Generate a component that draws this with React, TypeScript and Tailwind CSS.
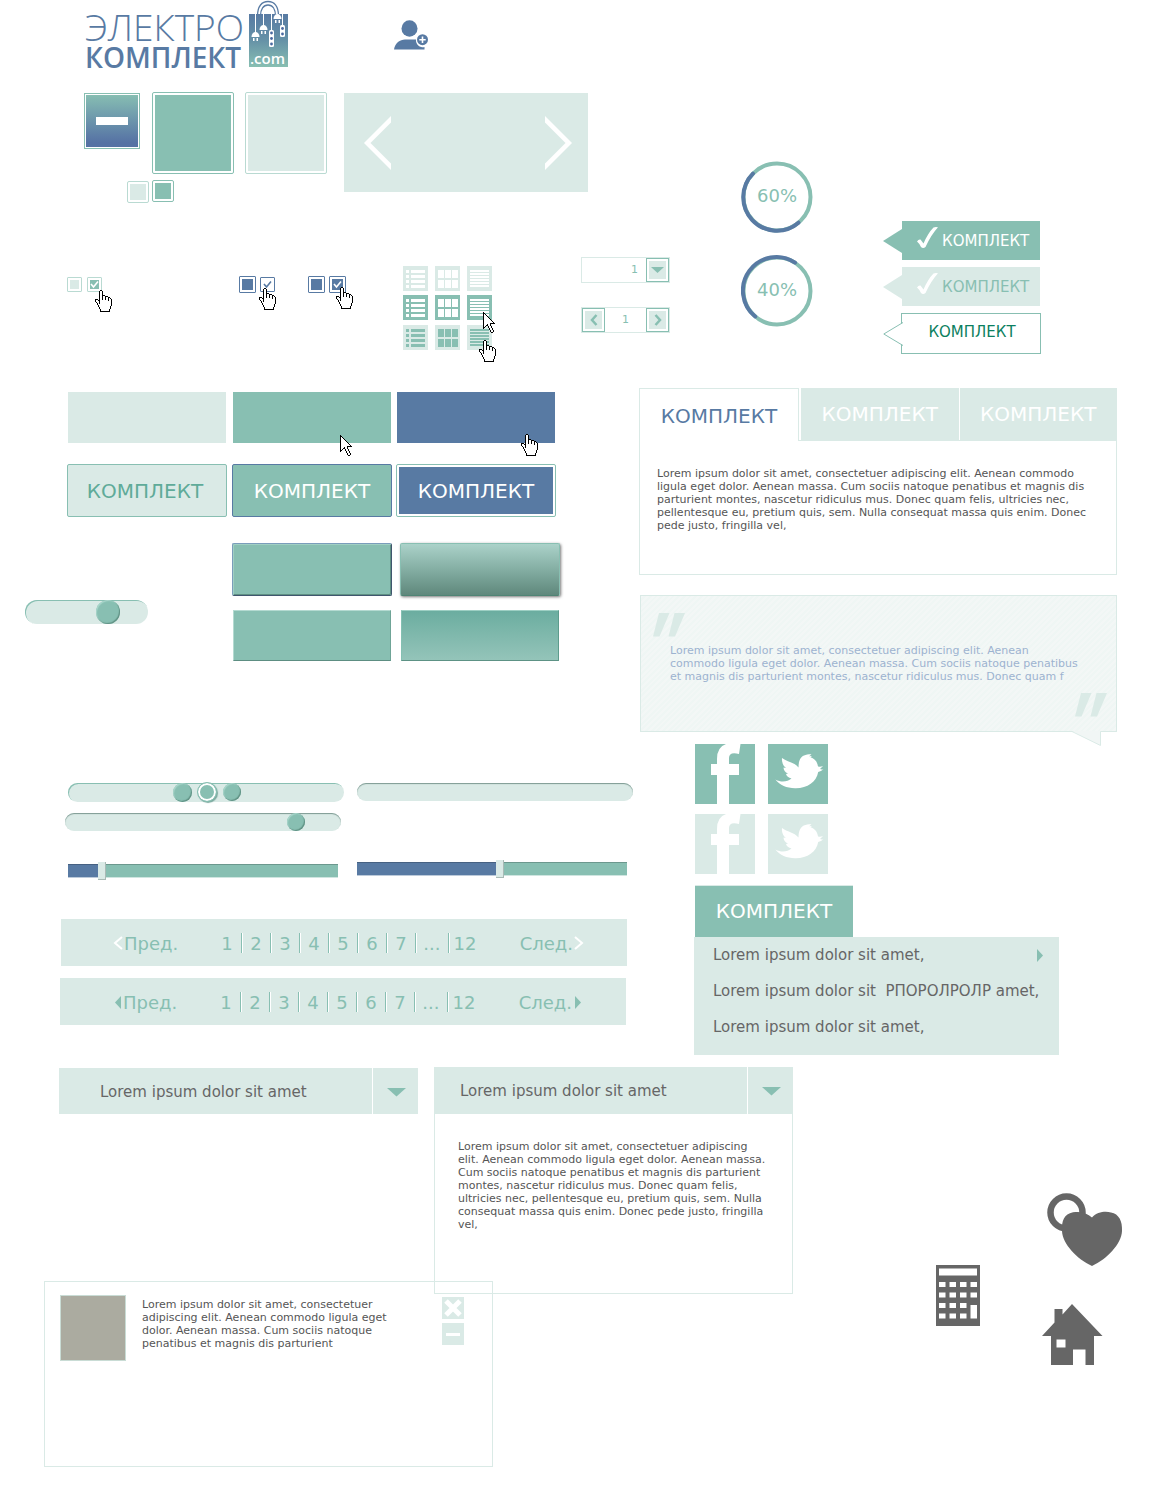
import React, { useState } from "react";

/* ---------- cursors ---------- */

const HAND = [
  ".....XX..........",
  "....XooX.........",
  "....XooX.........",
  "....XooX.........",
  "....XooX.........",
  "....XooXXX.......",
  "....XooXooXXX....",
  "....XooXooXooXX..",
  "....XooXooXooXoX.",
  "XXX.XooXooXooXooX",
  "XooXXooooooooXooX",
  "XoooXoooooooooooX",
  ".XooXoooooooooooX",
  "..XoXoooooooooooX",
  "..XoooooooooooooX",
  "...XooooooooooooX",
  "...XoooooooooooX.",
  "....XooooooooooX.",
  "....XooooooooooX.",
  ".....XooooooooX..",
  ".....XooooooooX..",
  ".....XXXXXXXXXX..",
];

const ARROW = [
  "X...........",
  "XX..........",
  "XoX.........",
  "XooX........",
  "XoooX.......",
  "XooooX......",
  "XoooooX.....",
  "XooooooX....",
  "XoooooooX...",
  "XooooooooX..",
  "XoooooooooX.",
  "XooooooXXXXX",
  "XoooXooX....",
  "XooXXooX....",
  "XoX..XooX...",
  "XX...XooX...",
  "X.....XooX..",
  "......XooX..",
  ".......XooX.",
  ".......XooX.",
  "........XX..",
];

const cells = (rows: string[], mark: string) =>
  rows
    .map((row, y) => [...row].map((c, x) => (c === mark ? `M${x} ${y}h1v1h-1z` : "")).join(""))
    .join("");

function Cursor({ rows, className }: { rows: string[]; className: string }) {
  return (
    <svg
      aria-hidden="true"
      width={rows[0].length}
      height={rows.length}
      shapeRendering="crispEdges"
      className={`pointer-events-none absolute z-10 ${className}`}
    >
      <path d={cells(rows, "o")} fill="#fff" />
      <path d={cells(rows, "X")} fill="#000" />
    </svg>
  );
}

/* ---------- header ---------- */

function Plug({ x, y }: { x: number; y: number }) {
  return (
    <g fill="#fff">
      <path d={`M${x - 4} ${y + 5}a4 5 0 0 1 8 0z`} />
      <path d={`M${x - 2.5} ${y + 6}h1.5v3h-1.5zM${x + 1} ${y + 6}h1.5v3h-1.5z`} />
    </g>
  );
}

function Bag() {
  return (
    <svg width="40" height="68" viewBox="0 0 40 68" aria-hidden="true">
      <defs>
        <linearGradient id="bag" x1="0" y1="0" x2="0" y2="1">
          <stop offset="0" stopColor="#587aa3" />
          <stop offset=".5" stopColor="#6692a7" />
          <stop offset="1" stopColor="#88bfb2" />
        </linearGradient>
      </defs>
      <rect y="14" width="39" height="53" fill="url(#bag)" />
      <path d="M8.500 16C8.500 6 13 1.500 19 1.500S29.500 6 29.500 16M11.500 16c0-7 3-11 7.500-11s7.500 4 7.500 11" fill="none" stroke="#587aa3" strokeWidth="1.300" />
      <path d="M6.500 14v19M14.500 14v12M22.500 14v17M28.500 14v1M33.500 14v12" stroke="#fff" strokeWidth="1" fill="none" />
      <Plug x={6.5} y={32} />
      <Plug x={14.5} y={25} />
      <Plug x={28.5} y={14} />
      <rect x="20" y="30" width="5" height="17" rx="1.500" fill="#fff" />
      <rect x="31" y="25" width="5" height="12" rx="1.500" fill="#fff" />
      <g fill="#4a69a0">
        <circle cx="22.500" cy="33" r="1.400" />
        <circle cx="22.500" cy="38.500" r="1.400" />
        <circle cx="22.500" cy="44" r="1.400" />
        <circle cx="33.500" cy="28.500" r="1.400" />
        <circle cx="33.500" cy="34" r="1.400" />
      </g>
      <text x="1" y="64" fontFamily="Open Sans" fontSize="15" fontWeight="600" fill="#fff">
        .com
      </text>
    </svg>
  );
}

function Header() {
  return (
    <header className="flex h-[92px] items-start pl-[85px]">
      <a href="#home" className="flex font-['Open_Sans',sans-serif] text-[#587aa3]">
        <span className="flex w-[164px] flex-col pt-2">
          <span className="text-[37px] leading-[38px] font-light">ЭЛЕКТРО</span>
          <span className="text-[28px] leading-[22px] font-semibold">КОМПЛЕКТ</span>
        </span>
        <Bag />
      </a>
      <button type="button" aria-label="Добавить пользователя" className="mt-5 ml-[105px]">
        <svg width="34" height="30" viewBox="0 0 34 30" fill="#587aa3">
          <ellipse cx="15.500" cy="8.500" rx="8" ry="8.300" />
          <path d="M0 29.500C1 23 6 19.500 11 19.500H22a7 7 0 0 0 8.500 7.600V29.500z" />
          <circle cx="28.500" cy="19.700" r="5.500" />
          <path d="M28.500 16.500v6.400M25.300 19.700h6.400" stroke="#fff" strokeWidth="1.600" />
        </svg>
      </button>
    </header>
  );
}

/* ---------- swatches and small controls ---------- */

function Swatches() {
  return (
    <div className="flex items-start pl-[84px]">
      <div>
        <div className="flex items-start">
          <button
            type="button"
            aria-label="Свернуть"
            className="mt-px mr-3 flex size-14 items-center justify-center border border-[#88bfb2] bg-linear-to-b from-[#88bfb2] to-[#5672a4] to-90% p-px shadow-[inset_0_0_0_1px_#fff]"
          >
            <span className="h-2 w-8 bg-white" />
          </button>
          <div className="mr-[11px] size-[82px] rounded-xs border border-[#88bfb2] bg-[#88bfb2] bg-clip-content p-[2px]" />
          <div className="size-[82px] rounded-xs border border-[#b9dad2] bg-[#daeae6] bg-clip-content p-[2px]" />
        </div>
        <div className="mt-1.5 flex gap-[3px] pl-[43px]">
          <div className="mt-px size-[22px] rounded-xs border border-[#b9dad2] bg-[#daeae6] bg-clip-content p-[2px]" />
          <div className="size-[22px] rounded-xs border border-[#88bfb2] bg-[#88bfb2] bg-clip-content p-[2px]" />
        </div>
      </div>
      <div className="mt-px ml-[17px] flex h-[99px] w-[244px] items-center justify-between bg-[#daeae6] px-4 pl-5">
        <button type="button" aria-label="Назад">
          <svg width="28" height="54" fill="#fff">
            <path d="M27 0v6.500L6.500 27 27 47.500V54L0 27z" />
          </svg>
        </button>
        <button type="button" aria-label="Вперёд">
          <svg width="28" height="54" fill="#fff">
            <path d="M1 0v6.500L21.500 27 1 47.500V54L28 27z" />
          </svg>
        </button>
      </div>
    </div>
  );
}

function Tick({ className }: { className: string }) {
  return (
    <svg width="9" height="9" aria-hidden="true" className={`pointer-events-none absolute ${className}`}>
      <path d="M1 4l2.500 3L8 1.500" fill="none" stroke="currentColor" strokeWidth="1.600" />
    </svg>
  );
}

function Check({ className, tick, cursor, label }: { className: string; tick?: string; cursor?: string; label: string }) {
  const [on, setOn] = useState(Boolean(tick));
  return (
    <span className="relative flex">
      <input
        type="checkbox"
        aria-label={label}
        checked={on}
        onChange={() => setOn(!on)}
        className={`appearance-none rounded-[1px] border bg-clip-content p-[2px] ${className}`}
      />
      {on && tick && <Tick className={tick} />}
      {cursor && <Cursor rows={HAND} className={cursor} />}
    </span>
  );
}

function ViewIcon({ kind, bg, fg }: { kind: number; bg: string; fg: string }) {
  const d =
    kind === 0
      ? [4, 9, 14, 19].map((y) => `M3 ${y}h3v3h-3zM8 ${y}h14v3h-14z`).join("")
      : kind === 1
        ? [4, 14].map((y) => [3, 10, 17].map((x) => `M${x} ${y}h6v8h-6z`).join("")).join("")
        : [4, 7, 10, 13, 16, 19].map((y) => `M3 ${y}h19v2h-19z`).join("");
  return (
    <svg width="25" height="25" shapeRendering="crispEdges">
      <rect width="25" height="25" fill={bg} />
      <path d={d} fill={fg} />
    </svg>
  );
}

const VIEW_ROWS = [
  { bg: "#daeae6", fg: "#fff" },
  { bg: "#88bfb2", fg: "#fff" },
  { bg: "#daeae6", fg: "#88bfb2" },
];
const VIEW_NAMES = ["Список", "Плитка", "Строки"];

const STEP_BTN =
  "flex h-[24px] w-[23px] items-center justify-center border border-[#88bfb2] bg-[#daeae6] bg-clip-content p-[2px] text-[#88bfb2]";

function SmallControls() {
  return (
    <div className="flex items-start">
      <div className="mt-[20px] flex items-start gap-[5px] pl-[67px]">
        <Check label="Выбор 1" className="size-[15px] border-[#b9dad2] bg-[#daeae6]" />
        <Check label="Выбор 2" className="size-[15px] border-[#b9dad2] bg-[#88bfb2]" tick="top-[3px] left-[3px] text-white" cursor="top-[13px] left-2" />
      </div>
      <div className="mt-[19px] ml-[137px] flex items-center gap-[4px]">
        <Check label="Выбор 3" className="size-[17px] border-[#587aa3] bg-[#587aa3]" />
        <Check label="Выбор 4" className="size-[15px] border-[#587aa3] bg-white" tick="top-[3px] left-[3px] text-[#587aa3]" cursor="top-[11px] left-[-1px]" />
      </div>
      <div className="mt-[19px] ml-[33px] flex items-start gap-[4px]">
        <Check label="Выбор 5" className="size-[17px] border-[#587aa3] bg-[#587aa3]" />
        <Check label="Выбор 6" className="size-[17px] border-[#587aa3] bg-[#587aa3]" tick="top-[4px] left-[4px] text-white" cursor="top-[11px] left-[7px]" />
      </div>
      <div className="mt-[9px] ml-[57px] flex flex-col gap-1">
        {VIEW_ROWS.map((r, i) => (
          <div key={i} className="flex gap-[7px] last:pt-px">
            {VIEW_NAMES.map((n, k) => (
              <button key={n} type="button" aria-label={n} className="relative">
                <ViewIcon kind={k} bg={r.bg} fg={r.fg} />
                {i === 1 && k === 2 && <Cursor rows={ARROW} className="top-[17px] left-4" />}
                {i === 2 && k === 2 && <Cursor rows={HAND} className="top-[15px] left-3" />}
              </button>
            ))}
          </div>
        ))}
      </div>
      <div className="ml-[89px] flex flex-col gap-6 text-[11px]">
        <div className="flex h-[26px] w-[89px] items-center border border-[#daeae6]">
          <input aria-label="Количество" defaultValue="1" className="w-0 flex-1 pr-2 text-right text-[#88bfb2] outline-none" />
          <button type="button" aria-label="Раскрыть" className={STEP_BTN}>
            <svg width="13" height="6" fill="currentColor">
              <path d="M0 0h13L6.500 6z" />
            </svg>
          </button>
        </div>
        <div className="flex h-[26px] w-[89px] items-center border border-[#daeae6]">
          <button type="button" aria-label="Меньше" className={STEP_BTN}>
            <svg width="8" height="12" fill="none" stroke="currentColor" strokeWidth="2.500">
              <path d="M6.500 1L2 6l4.500 5" />
            </svg>
          </button>
          <input aria-label="Число" defaultValue="1" className="w-0 flex-1 text-center text-[#88bfb2] outline-none" />
          <button type="button" aria-label="Больше" className={STEP_BTN}>
            <svg width="8" height="12" fill="none" stroke="currentColor" strokeWidth="2.500">
              <path d="M1.500 1L6 6l-4.500 5" />
            </svg>
          </button>
        </div>
      </div>
    </div>
  );
}

function Ring({ text, arc }: { text: string; arc: string }) {
  return (
    <div className="grid size-[72px] place-items-center text-[18px] text-[#88bfb2]">
      <svg width="72" height="72" className="col-start-1 row-start-1" fill="none" strokeWidth="4" strokeLinecap="round">
        <circle cx="36" cy="36" r="33.500" stroke="#88bfb2" />
        <path d={arc} stroke="#587aa3" />
      </svg>
      <span className="col-start-1 row-start-1 pb-1">{text}</span>
    </div>
  );
}

function WhiteCheck() {
  return (
    <svg width="21" height="22" viewBox="0 0 21 22" fill="#fff" aria-hidden="true">
      <path d="M0 14.500Q1.500 12 3.500 12.500L6.500 16.500Q11 6 16.500.500Q18.500-.300 21 .300Q14 8 8.500 20Q6 22 4 20Q2.500 16.500 0 14.500z" />
    </svg>
  );
}

const LABEL_BODY = "flex h-[39px] w-[138px] items-center gap-1 pt-0.5 pl-[15px]";

function Labels() {
  return (
    <div className="flex flex-col text-[15px]">
      <button type="button" className="flex items-center text-white">
        <svg width="19" height="24" fill="#88bfb2">
          <path d="M0 12L19 0v24z" />
        </svg>
        <span className={`bg-[#88bfb2] ${LABEL_BODY}`}>
          <span className="pb-2"><WhiteCheck /></span>
          КОМПЛЕКТ
        </span>
      </button>
      <button type="button" className="mt-[7px] flex items-center text-[#88bfb2]">
        <svg width="19" height="24" fill="#daeae6">
          <path d="M0 12L19 0v24z" />
        </svg>
        <span className={`bg-[#daeae6] ${LABEL_BODY}`}>
          <span className="pb-2"><WhiteCheck /></span>
          КОМПЛЕКТ
        </span>
      </button>
      <button type="button" className="relative mt-[7px] ml-[18px] flex h-[41px] w-[140px] items-center justify-center border border-[#88bfb2] pb-0.5 pl-0.5 text-[#0c7f60]">
        <svg width="20" height="24" className="absolute top-2 -left-[19px]">
          <path d="M20 .500L.800 12 20 23.500" fill="#fff" stroke="#88bfb2" />
        </svg>
        КОМПЛЕКТ
      </button>
    </div>
  );
}

/* ---------- buttons ---------- */

function Buttons() {
  return (
    <div>
      <div className="flex pl-[68px]">
        <div className="h-[51px] w-[158px] bg-[#daeae6]" />
        <div className="relative ml-[7px] h-[51px] w-[158px] bg-[#88bfb2]">
          <Cursor rows={ARROW} className="right-[39px] -bottom-[13px]" />
        </div>
        <div className="relative ml-1.5 h-[51px] w-[158px] bg-[#587aa3]">
          <Cursor rows={HAND} className="right-[17px] -bottom-[13px]" />
        </div>
      </div>
      <div className="mt-[21px] flex pl-[67px] text-[20px]">
        <button type="button" className="h-[53px] w-[160px] rounded-xs border border-[#88bfb2] bg-[#daeae6] pr-1 text-[#5fab99]">КОМПЛЕКТ</button>
        <button type="button" className="ml-[5px] h-[53px] w-[160px] rounded-xs border border-[#587aa3] bg-[#88bfb2] text-white">КОМПЛЕКТ</button>
        <button type="button" className="ml-1 h-[53px] w-[160px] rounded-xs border border-[#88bfb2] bg-[#587aa3] bg-clip-content p-[2px] text-white">КОМПЛЕКТ</button>
      </div>
      <div className="mt-[26px] flex items-start">
        <div className="mt-[57px] pl-[25px]">
          <Slider label="Переключатель" max={99} value={71} className="h-6 w-[123px] shadow-[inset_1px_1px_0_#88bfb2]" thumb="[&::-webkit-slider-thumb]:size-6" />
        </div>
        <div className="ml-[84px]">
          <div className="flex gap-2">
            <button type="button" aria-label="Кнопка" className="h-[53px] w-[160px] rounded-xs border border-t-[#7b9dbb] border-r-[#40566e] border-b-[#40566e] border-l-[#7b9dbb] bg-[#88bfb2] shadow-[inset_1px_1px_0_#a0cfc3,inset_-1px_-1px_0_#5f9083]" />
            <button type="button" aria-label="Кнопка" className="h-[53px] w-[160px] rounded-xs border border-[#88bfb2] border-b-[#4f8474] bg-linear-to-b from-[#abd2c9] via-[#84aea3] to-[#5f887c] shadow-[1px_1px_3px_#777]" />
          </div>
          <div className="mt-[14px] flex gap-2.5 pl-px">
            <button type="button" aria-label="Кнопка" className="h-[51px] w-[158px] border border-t-[#b4dad1] border-r-[#6fa497] border-b-[#5d8e82] border-l-[#b4dad1] bg-[#88bfb2]" />
            <button type="button" aria-label="Кнопка" className="h-[51px] w-[158px] border border-t-[#9dcfc3] border-r-[#5d9c8d] border-b-[#5d9285] border-l-[#84c0b2] bg-linear-to-b from-[#6bada0] to-[#94c4b9]" />
          </div>
        </div>
      </div>
    </div>
  );
}

/* ---------- sliders ---------- */

const ROUND_THUMB =
  "[&::-webkit-slider-thumb]:appearance-none [&::-webkit-slider-thumb]:rounded-full [&::-webkit-slider-thumb]:bg-[#88bfb2] [&::-webkit-slider-thumb]:shadow-[inset_-1px_-1px_1px_#5f9083,inset_1px_1px_1px_#a9d6cb]";

function Slider({ label, max, value, className, thumb }: { label: string; max: number; value: number; className: string; thumb: string }) {
  return (
    <input
      type="range"
      aria-label={label}
      min={0}
      max={max}
      defaultValue={value}
      className={`block appearance-none rounded-full bg-[#daeae6] ${ROUND_THUMB} ${className} ${thumb}`}
    />
  );
}

function TripleSlider() {
  const layer = `pointer-events-none absolute inset-x-0 w-full appearance-none bg-transparent ${ROUND_THUMB} [&::-webkit-slider-thumb]:pointer-events-auto`;
  return (
    <div className="relative h-[19px] w-[276px] rounded-full bg-[#daeae6] shadow-[inset_1px_1px_0_#88bfb2]">
      <input type="range" aria-label="Минимум" max={257} defaultValue={105} className={`${layer} top-0 h-[19px] [&::-webkit-slider-thumb]:size-[19px] [&::-webkit-slider-thumb]:shadow-[1px_1px_2px_#7aa89d]`} />
      <input type="range" aria-label="Среднее" max={256} defaultValue={129} className={`${layer} -top-px h-[20px] [&::-webkit-slider-thumb]:size-[20px] [&::-webkit-slider-thumb]:border [&::-webkit-slider-thumb]:border-[#88bfb2] [&::-webkit-slider-thumb]:shadow-[inset_0_0_0_2px_#fff,1px_1px_1px_#7aa89d]`} />
      <input type="range" aria-label="Максимум" max={258} defaultValue={155} className={`${layer} top-0 h-[18px] [&::-webkit-slider-thumb]:size-[18px]`} />
    </div>
  );
}

function Bar({ label, initial }: { label: string; initial: number }) {
  const [v, setV] = useState(initial);
  return (
    <input
      type="range"
      aria-label={label}
      max={262}
      value={v}
      onChange={(e) => setV(Number(e.target.value))}
      style={{ backgroundImage: `linear-gradient(90deg, #587aa3 ${v + 4}px, #88bfb2 ${v + 4}px)` }}
      className="block h-[14px] w-[270px] appearance-none shadow-[inset_0_1px_0_#00000033,inset_0_-1px_0_#ffffff99] [&::-webkit-slider-thumb]:h-[18px] [&::-webkit-slider-thumb]:w-2 [&::-webkit-slider-thumb]:appearance-none [&::-webkit-slider-thumb]:bg-[#daeae6] [&::-webkit-slider-thumb]:shadow-[inset_-1px_-1px_0_#a9bab6]"
    />
  );
}

function Sliders() {
  return (
    <div className="mt-[122px]">
      <div className="flex gap-[13px] pl-[68px]">
        <TripleSlider />
        <div className="h-[18px] w-[276px] rounded-full bg-[#daeae6] shadow-[inset_0_1px_1px_#7d9a92]" />
      </div>
      <div className="mt-[11px] pl-[65px]">
        <Slider label="Цена" max={258} value={222} className="h-[18px] w-[276px] shadow-[inset_0_1px_1px_#7d9a92]" thumb="[&::-webkit-slider-thumb]:size-[18px]" />
      </div>
      <div className="mt-[31px] flex gap-[19px] pl-[68px]">
        <div className="pt-0.5"><Bar label="Громкость" initial={30} /></div>
        <Bar label="Прогресс" initial={139} />
      </div>
    </div>
  );
}

/* ---------- pagination ---------- */

const PAGES = ["1", "2", "3", "4", "5", "6", "7", "...", "12"];

function Pagination({ chevrons, className }: { chevrons: boolean; className: string }) {
  return (
    <nav aria-label="Страницы" className={`flex h-[47px] items-center bg-[#daeae6] pt-px pr-[43px] pl-[52px] text-[18px] text-[#88bfb2] ${className}`}>
      <a href="#prev" className="flex items-center gap-px">
        {chevrons ? (
          <svg width="10" height="14" fill="none" stroke="#fff" strokeWidth="2">
            <path d="M9 1L2 7l7 6" />
          </svg>
        ) : (
          <svg width="10" height="13" fill="currentColor">
            <path d="M9 0v13L3 6.500z" />
          </svg>
        )}
        Пред.
      </a>
      <span className="mx-auto flex items-center pr-1">
        {PAGES.map((p, i) => (
          <a
            key={p}
            href={`#page-${i + 1}`}
            className={`flex h-[20px] items-center justify-center ${
              i === 8 ? "w-[32px]" : i === 7 ? "w-[33px] border-r border-[#88bfb2] shadow-[1px_0_0_#fff]" : "w-[29px] border-r border-[#88bfb2] shadow-[1px_0_0_#fff]"
            }`}
          >
            {p}
          </a>
        ))}
      </span>
      <a href="#next" className="flex items-center gap-px">
        След.
        {chevrons ? (
          <svg width="10" height="14" fill="none" stroke="#fff" strokeWidth="2">
            <path d="M1 1l7 6-7 6" />
          </svg>
        ) : (
          <svg width="10" height="13" fill="currentColor">
            <path d="M2 0v13l6-6.500z" />
          </svg>
        )}
      </a>
    </nav>
  );
}

/* ---------- right column ---------- */

function Lines({ lines, className }: { lines: string[]; className: string }) {
  return (
    <p className={className}>
      {lines.map((l) => (
        <span key={l} className="block whitespace-nowrap">
          {l}
        </span>
      ))}
    </p>
  );
}

function Tabs() {
  return (
    <section className="-ml-px">
      <div role="tablist" className="flex h-[53px] text-[20px]">
        <button role="tab" aria-selected="true" type="button" className="w-[160px] border border-b-0 border-[#daeae6] pt-0.5 text-[#587aa3]">
          КОМПЛЕКТ
        </button>
        <div className="flex flex-1 gap-px border-b border-[#daeae6] pl-0.5">
          <button role="tab" aria-selected="false" type="button" className="flex-1 bg-[#daeae6] text-white">
            КОМПЛЕКТ
          </button>
          <button role="tab" aria-selected="false" type="button" className="flex-1 bg-[#daeae6] text-white">
            КОМПЛЕКТ
          </button>
        </div>
      </div>
      <div role="tabpanel" className="border border-t-0 border-[#daeae6] pt-[26px] pr-3 pb-[42px] pl-[17px]">
        <Lines
          className="text-[11px] leading-[13px] text-[#555]"
          lines={[
            "Lorem ipsum dolor sit amet, consectetuer adipiscing elit. Aenean commodo",
            "ligula eget dolor. Aenean massa. Cum sociis natoque penatibus et magnis dis",
            "parturient montes, nascetur ridiculus mus. Donec quam felis, ultricies nec,",
            "pellentesque eu, pretium quis, sem. Nulla consequat massa quis enim. Donec",
            "pede justo, fringilla vel,",
          ]}
        />
      </div>
    </section>
  );
}

function QuoteMark({ className }: { className: string }) {
  return (
    <svg width="33" height="24" fill="#daeae6" aria-hidden="true" className={className}>
      <path d="M6 0h10.500L6.500 23.500H0zM21.500 0H32L22 23.500H15.500z" />
    </svg>
  );
}

function Quote() {
  return (
    <blockquote className="relative mt-[20px] flex h-[137px] flex-col border border-[#daeae6] bg-[#f0f6f4] bg-[repeating-linear-gradient(135deg,#f3f7f6_0_2px,#eff6f4_2px_4px)] pt-[17px] pr-2 pl-[9px]">
      <QuoteMark className="ml-[3px]" />
      <Lines
        className="mt-[7px] pl-5 text-[11px] leading-[13px] text-[#9db3d0]"
        lines={[
          "Lorem ipsum dolor sit amet, consectetuer adipiscing elit. Aenean",
          "commodo ligula eget dolor. Aenean massa. Cum sociis natoque penatibus",
          "et magnis dis parturient montes, nascetur ridiculus mus. Donec quam f",
        ]}
      />
      <QuoteMark className="mt-2.5 self-end" />
      <svg width="30" height="16" className="absolute right-[14px] -bottom-[16px]" aria-hidden="true">
        <path d="M0 0L28.500 14.500V0" fill="#f1f6f5" />
        <path d="M0 .500L28.500 14.500V.500" fill="none" stroke="#daeae6" />
      </svg>
    </blockquote>
  );
}

function Social({ className }: { className: string }) {
  return (
    <div className="flex gap-[13px]">
      <a href="#facebook" aria-label="Facebook" className={`size-[60px] ${className}`}>
        <svg width="60" height="60" fill="#fff">
          <path d="M22 60V31H16V20h6v-5Q22 3 31 0H45.500L44 10Q34 7.500 34 14v6H44V31H34V60z" />
        </svg>
      </a>
      <a href="#twitter" aria-label="Twitter" className={`size-[60px] ${className}`}>
        <svg width="60" height="60" fill="#fff">
          <path d="M7.300 35.500C14 39 19.500 37.500 23.500 34.500C20.500 34 18.500 32 18 30L20 29.500C17 28.500 15.500 26 15.500 23.500L18 24C15 22 13.500 17.500 14 14C19 18 26 18 30.500 23.500C30.500 17 32.500 12 37.500 11C39.500 10 41.500 10 43.500 10.500L41 12.300L44 12L42.500 13.300C46.500 14.300 49.500 18 50 22.500Q52.500 23 55 22L52 25Q53.500 25.700 55.500 25.200Q53 27.500 50.200 28C48.500 38 39 44.500 27 44.200C18.500 44 12 41.500 7.300 35.500z" />
        </svg>
      </a>
    </div>
  );
}

function Menu() {
  return (
    <nav aria-label="Меню" className="mt-[11px] ml-[54px] w-[365px]">
      <button type="button" className="ml-px block h-[52px] w-[158px] border-t border-[#daeae6] bg-[#88bfb2] pb-0.5 text-[20px] text-white">
        КОМПЛЕКТ
      </button>
      <ul className="flex flex-col gap-[18px] bg-[#daeae6] pt-[9px] pr-[15px] pb-[19px] pl-[19px] text-[15px] leading-[18px] whitespace-pre text-[#666]">
        <li>
          <a href="#1" className="flex items-center justify-between">
            Lorem ipsum dolor sit amet,
            <svg width="7" height="13" fill="#88bfb2" aria-hidden="true">
              <path d="M0 0l6 6.500L0 13z" />
            </svg>
          </a>
        </li>
        <li><a href="#2">{"Lorem ipsum dolor sit  РПОРОЛРОЛР amet,"}</a></li>
        <li><a href="#3">Lorem ipsum dolor sit amet,</a></li>
      </ul>
    </nav>
  );
}

/* ---------- bottom ---------- */

function Caret() {
  return (
    <svg width="20" height="9" fill="#88bfb2" aria-hidden="true">
      <path d="M0 0h19L9.500 8.500z" />
    </svg>
  );
}

function Bottom() {
  return (
    <div className="mt-3 flex items-start">
      <div className="w-[793px]">
        <div className="flex items-start pl-[59px]">
          <div className="relative mt-px h-[46px] w-[359px] bg-[#daeae6]">
            <select aria-label="Выбор варианта" className="size-full appearance-none bg-transparent pt-0.5 pl-[41px] text-[15px] text-[#666]">
              <option>Lorem ipsum dolor sit amet</option>
            </select>
            <span className="pointer-events-none absolute inset-y-0 right-0 flex w-[46px] items-center justify-center border-l border-white pt-0.5 pl-0.5">
              <Caret />
            </span>
          </div>
          <div className="ml-4 w-[359px]">
            <button type="button" aria-expanded="true" className="flex h-[47px] w-full items-stretch bg-[#daeae6] text-[15px] text-[#666]">
              <span className="flex flex-1 items-center pt-0.5 pl-[26px]">Lorem ipsum dolor sit amet</span>
              <span className="flex w-[46px] items-center justify-center border-l border-white pt-0.5 pl-0.5">
                <Caret />
              </span>
            </button>
            <div className="h-[180px] border border-t-0 border-[#daeae6] pt-[26px] pl-[23px]">
              <Lines
                className="text-[11px] leading-[13px] text-[#555]"
                lines={[
                  "Lorem ipsum dolor sit amet, consectetuer adipiscing",
                  "elit. Aenean commodo ligula eget dolor. Aenean massa.",
                  "Cum sociis natoque penatibus et magnis dis parturient",
                  "montes, nascetur ridiculus mus. Donec quam felis,",
                  "ultricies nec, pellentesque eu, pretium quis, sem. Nulla",
                  "consequat massa quis enim. Donec pede justo, fringilla",
                  "vel,",
                ]}
              />
            </div>
          </div>
        </div>
        <article className="-mt-[13px] ml-11 flex h-[186px] w-[449px] items-start border border-[#daeae6] pt-[13px] pr-7 pl-[15px]">
          <div className="size-[66px] border border-[#c9dcd5] bg-[#ababa0]" />
          <Lines
            className="mt-[3px] ml-4 text-[11px] leading-[13px] text-[#555]"
            lines={[
              "Lorem ipsum dolor sit amet, consectetuer",
              "adipiscing elit. Aenean commodo ligula eget",
              "dolor. Aenean massa. Cum sociis natoque",
              "penatibus et magnis dis parturient",
            ]}
          />
          <div className="mt-0.5 ml-auto flex flex-col gap-1">
            <button type="button" aria-label="Закрыть" className="flex size-[22px] items-center justify-center bg-[#daeae6]">
              <svg width="18" height="18" stroke="#fff" strokeWidth="5">
                <path d="M2 2l14 14M16 2L2 16" />
              </svg>
            </button>
            <button type="button" aria-label="Свернуть" className="flex size-[22px] items-center justify-center bg-[#daeae6]">
              <span className="h-[3px] w-[14px] bg-white" />
            </button>
          </div>
        </article>
      </div>
      <div className="flex pt-[126px] pl-[143px]">
        <svg width="44" height="61" aria-label="Калькулятор" className="mt-[72px]">
          <rect width="44" height="61" fill="#666" />
          <path
            fill="#fff"
            d={
              "M3 3.500h38v7H3z" +
              [17, 27.5, 38, 48.5].map((y) => [3, 13.5, 24].map((x) => `M${x} ${y}h6.500v5h-6.500z`).join("")).join("") +
              "M34.500 17h6.500v5h-6.500zM34.500 27.500h6.500v5h-6.500zM34.500 40h6.500v13.500h-6.500z"
            }
          />
        </svg>
        <div className="ml-[62px] flex flex-col">
          <svg width="80" height="73" aria-label="Избранное" className="ml-[5px]">
            <circle cx="19.500" cy="19.500" r="16" fill="none" stroke="#666" strokeWidth="6.500" />
            <path d="M45 24.500C50 19 58 18 64 19.500C72 21 75.500 28 75 38C74.500 51 60 66 45 73C30 66 15.500 51 15 38C14.500 28 17 21 26 19.300C34 18 40 20 45 24.500z" fill="#666" />
          </svg>
          <svg width="62" height="63" aria-label="Дом" className="mt-[37px]" fill="#666">
            <path d="M0 33L12.500 19.500V6H20.500v5.500L30 1 60.500 33H52v29H43.500V46.500H31V62H9V33zM14.500 36.500v8h9v-8z" fillRule="evenodd" />
          </svg>
        </div>
      </div>
    </div>
  );
}

export default function App() {
  return (
    <main className="min-h-screen bg-white pb-8 font-['DejaVu_Sans',Verdana,sans-serif]">
      <Header />
      <div className="flex h-[296px] items-start">
        <div className="w-[741px]">
          <Swatches />
          <div className="mt-[54px]">
            <SmallControls />
          </div>
        </div>
        <div className="flex flex-col gap-[22px] pt-[69px]">
          <Ring text="60%" arc="M11.900 12.700A33.500 33.500 0 0 0 57.500 61.700" />
          <Ring text="40%" arc="M54 7.700A33.500 33.500 0 0 0 14.200 61.500" />
        </div>
        <div className="pt-[129px] pl-[70px]">
          <Labels />
        </div>
      </div>
      <div className="grid grid-cols-[640fr_530fr] items-start">
        <div className="pt-1">
          <Buttons />
          <Sliders />
          <Pagination chevrons className="mt-[41px] mr-[13px] ml-[61px]" />
          <Pagination chevrons={false} className="mt-3 mr-[14px] ml-[60px]" />
        </div>
        <div className="pr-[53px]">
          <Tabs />
          <Quote />
          <div className="mt-3 flex flex-col gap-2.5 pl-[55px]">
            <Social className="bg-[#88bfb2]" />
            <Social className="bg-[#daeae6]" />
          </div>
          <Menu />
        </div>
      </div>
      <Bottom />
    </main>
  );
}
